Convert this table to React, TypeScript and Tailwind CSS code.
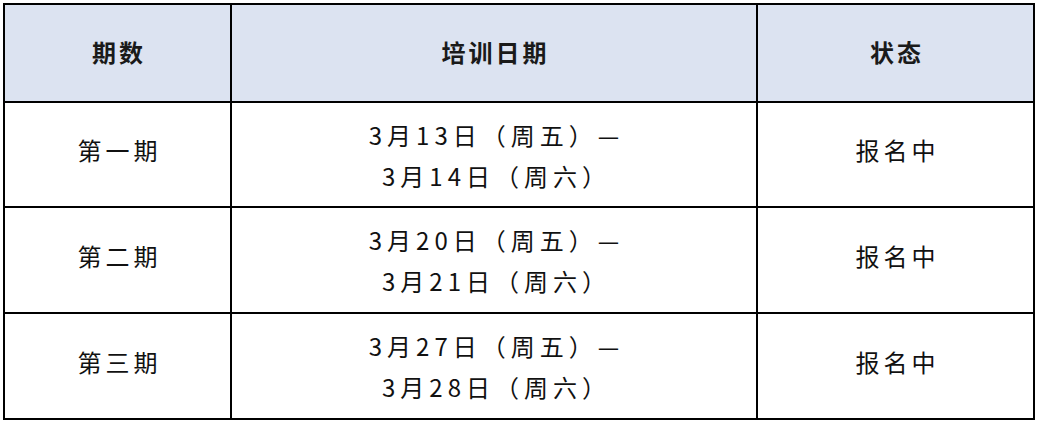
import React from "react";

const rows = [
  { p: "第一期", d1: "3月13日（周五）—", d2: "3月14日（周六）" },
  { p: "第二期", d1: "3月20日（周五）—", d2: "3月21日（周六）" },
  { p: "第三期", d1: "3月27日（周五）—", d2: "3月28日（周六）" },
];

const font = { fontFamily: '"Noto Sans CJK SC", "Noto Sans", sans-serif' };

export default function App() {
  return (
    <div className="w-[1038px] h-[424px] bg-white pt-[3px] pl-[3px]" style={font}>
      <div className="w-[1032px] bg-black p-[2px] grid grid-cols-[225px_524px_275px] grid-rows-[96px_103px_104px_104px] gap-[2px]">
        {["期数", "培训日期", "状态"].map((h) => (
          <div
            key={h}
            className="bg-[#dce3f1] flex items-center justify-center text-[24px] font-bold text-[#1a1a1a] tracking-[3px] pl-[3px] pb-[2px]"
          >
            {h}
          </div>
        ))}
        {rows.map((r) => (
          <React.Fragment key={r.p}>
            <div className="bg-white flex items-center justify-center text-[24px] text-[#111111] tracking-[4px] pl-[4px] pb-[9px]">
              {r.p}
            </div>
            <div className="bg-white flex flex-col items-center justify-center text-[24px] text-[#111111] tracking-[5px] pl-[5px] leading-[41px]">
              <div>{r.d1}</div>
              <div>{r.d2}</div>
            </div>
            <div className="bg-white flex items-center justify-center text-[24px] text-[#111111] tracking-[4px] pl-[4px] pb-[9px]">
              报名中
            </div>
          </React.Fragment>
        ))}
      </div>
    </div>
  );
}
